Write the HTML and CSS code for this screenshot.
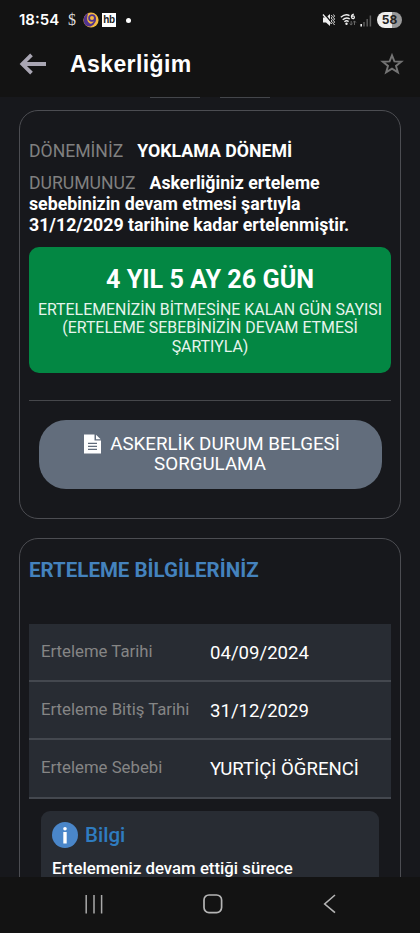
FILE: index.html
```html
<!DOCTYPE html>
<html lang="tr">
<head>
<meta charset="utf-8">
<title>Askerliğim</title>
<link rel="stylesheet" href="styles.css">
</head>
<body>
<header class="top">
  <div class="status">
    <span class="clock">18:54</span>
    <span class="dollar">$</span>
    <svg class="nine" width="16" height="16" viewBox="0 0 16 16"><circle cx="8" cy="8" r="7.600" fill="#f3b941"/><path d="M5.500.8A7.600 7.600 0 0 0 3.500 13.800C6 15.500 9.500 14.200 11 12C6.500 12.500 3.600 9.400 4.200 5.400C4.400 3.500 4.800 2 5.500.8Z" fill="#513390"/><circle cx="9" cy="6" r="2.900" fill="none" stroke="#513390" stroke-width="1.800"/><path d="M12 5.500C12.500 8.500 11.500 11.300 8.500 12.500" fill="none" stroke="#513390" stroke-width="1.800"/></svg>
    <span class="hb">hb</span>
    <span class="dot"></span>
    <div class="signals">
      <svg width="13" height="14" viewBox="0 0 13 14"><path d="M1 4.500h3L8 1v12L4 9.500H1z" fill="#eee"/><path d="M2.300.8L9.300 9.300" stroke="#131313" stroke-width="1.400"/><path d="M1 1.500L8.500 10.500" stroke="#eee" stroke-width="1.300"/><path d="M9.300 2l1 1.500-1 1.500 1 1.500-1 1.500 1 1.500-1 1.500M11.500 1.500l1 1.500-1 1.500 1 1.500-1 1.500 1 1.500-1 1.500 1 1.500" stroke="#ddd" fill="none"/></svg>
      <svg width="17" height="14" viewBox="0 0 17 14"><path d="M.8 4.300Q5.500.3 9.500 2.700M2.700 6.700Q6.300 3.700 9.800 6M4.400 8.800Q6.500 7 8.600 8.600" fill="none" stroke="#eee" stroke-width="1.400"/><circle cx="6.500" cy="10.700" r="1.200" fill="#eee"/><path d="M13.800 1.200Q11.300 1.800 11.500 4.200" stroke="#eee" stroke-width="1.300" fill="none"/><circle cx="13" cy="4.300" r="1.400" stroke="#eee" stroke-width="1.200" fill="none"/><path d="M11.200 8v4M9.800 10.500l1.400 1.600 1.400-1.600M14.500 12V8M13.100 9.500l1.400-1.600 1.400 1.600" stroke="#666" fill="none"/></svg>
      <svg width="12" height="13" viewBox="0 0 12 13"><path d="M1.200 10v2.500" stroke="#eee" stroke-width="1.600"/><path d="M4 8v4.500M7.200 5v7.500M10.400 1.500v11" stroke="#5c5c5c" stroke-width="1.500"/></svg>
      <span class="battery">58</span>
    </div>
  </div>
  <div class="bar">
    <svg class="back" width="28" height="24" viewBox="0 0 28 24"><path d="M27 12H4M12.500 2.800L3.300 12l9.200 9.200" fill="none" stroke="#a9a6b3" stroke-width="3.800"/></svg>
    <h1>Askerliğim</h1>
    <svg class="star" width="24" height="24" viewBox="0 0 24 24"><path d="M12 3.300l2.400 6.100 6.900.3-5.300 4.200 1.900 6.500-5.900-3.700-5.900 3.700 1.900-6.500L2.700 9.700l6.900-.3z" fill="none" stroke="#747474" stroke-width="1.900"/></svg>
  </div>
</header>
<main class="content">
  <div class="tabs"><i></i><i></i></div>
  <section class="card summary">
    <p class="period"><span class="key">DÖNEMİNİZ</span><b>YOKLAMA DÖNEMİ</b></p>
    <p class="state"><span class="key">DURUMUNUZ</span><b>Askerliğiniz erteleme<br>sebebinizin devam etmesi şartıyla<br>31/12/2029 tarihine kadar ertelenmiştir.</b></p>
    <div class="remaining">
      <strong>4 YIL 5 AY 26 GÜN</strong>
      <p>ERTELEMENİZİN BİTMESİNE KALAN GÜN SAYISI<br>(ERTELEME SEBEBİNİZİN DEVAM ETMESİ<br>ŞARTIYLA)</p>
    </div>
    <hr>
    <button class="query"><span class="line"><svg width="17" height="20" viewBox="0 0 17 20"><path d="M0 .5h10.500V6.500H17V19.500H0z" fill="#fff"/><path d="M12 .8L16.700 5.300H12z" fill="#fff"/><path d="M4 9.300h9M4 12.300h9M4 15.300h9" stroke="#626d7c" stroke-width="1.200"/></svg>ASKERLİK DURUM BELGESİ</span><span>SORGULAMA</span></button>
  </section>
  <section class="card details">
    <h2>ERTELEME BİLGİLERİNİZ</h2>
    <dl>
      <div><dt>Erteleme Tarihi</dt><dd>04/09/2024</dd></div>
      <div><dt>Erteleme Bitiş Tarihi</dt><dd>31/12/2029</dd></div>
      <div><dt>Erteleme Sebebi</dt><dd>YURTİÇİ ÖĞRENCİ</dd></div>
    </dl>
    <aside class="info">
      <h3><svg width="26" height="26" viewBox="0 0 26 26"><circle cx="13" cy="13" r="13" fill="#4a86c9"/><circle cx="13" cy="6.700" r="1.800" fill="#fff"/><path d="M13 10v11.500" stroke="#fff" stroke-width="3.400"/></svg>Bilgi</h3>
      <p>Ertelemeniz devam ettiği sürece</p>
    </aside>
  </section>
</main>
<nav class="nav">
  <svg width="18" height="19" viewBox="0 0 18 19"><path d="M1.200 0v18.500M9 0v18.500M16.600 0v18.500" stroke="#aaa" stroke-width="1.500"/></svg>
  <svg width="20" height="20" viewBox="0 0 20 20"><rect x="1" y="1" width="17.600" height="17.600" rx="5" fill="none" stroke="#b5b5b5" stroke-width="1.700"/></svg>
  <svg width="13" height="20" viewBox="0 0 13 20"><path d="M12 1L1.700 10 12 18.700" fill="none" stroke="#b5b5b5" stroke-width="1.600"/></svg>
</nav>
</body>
</html>
```
FILE: styles.css
```css
* { box-sizing: border-box; }
body, h1, h2, h3, p, dl, dd, hr { margin: 0; }
body {
  width: 420px; height: 933px; overflow: hidden;
  display: flex; flex-direction: column;
  background: #17181c; color: #fff;
  font-family: Roboto, sans-serif; white-space: nowrap;
}
svg { display: block; flex: none; }
.top { height: 97px; flex: none; background: #131313; }
.status { height: 40px; display: flex; align-items: center; padding: 0 18px 0 19px; }
.clock { font: 600 15px/18px Inter, sans-serif; width: 49px; }
.dollar { font: 16px/18px "Liberation Serif", serif; width: 15px; color: #ddd; }
.hb { margin-left: 3px; width: 14px; height: 14px; background: #fff; color: #222; font: 700 10px/13px "Liberation Sans", sans-serif; text-align: center; letter-spacing: -.3px; }
.dot { width: 5px; height: 5px; border-radius: 50%; background: #fff; margin-left: 10px; }
.signals { display: flex; align-items: center; margin-left: auto; gap: 5px; }
.signals svg:nth-child(3) { margin-left: -2px; }
.battery { width: 25px; height: 16px; border-radius: 8px; background: linear-gradient(90deg, #eee 58%, #999 58%); color: #222; font: 700 12px/16px Inter, sans-serif; text-align: center; }
.bar { height: 48px; display: flex; align-items: center; padding: 0 16px 0 19px; }
.bar h1 { font: 700 23px/28px "Liberation Sans", sans-serif; margin: -1px 0 0 23px; letter-spacing: .4px; }
.star { margin-left: auto; }
.content { flex: 1; min-height: 0; overflow: hidden; padding: 0 19px; }
.tabs { height: 13px; display: flex; justify-content: center; gap: 20px; }
.tabs i { width: 50px; height: 1px; background: #44464b; }
.card { border: 1px solid #4c4d52; border-radius: 19px; padding: 0 9px; }
.summary { height: 409px; padding-top: 30px; }
.key { color: #808080; margin-right: 14px; font-size: 17.600px; }
.period, .state { font-size: 17.500px; line-height: 21px; }
.period { margin-bottom: 11px; }
b { font-weight: 700; font-size: 17.750px; }
.remaining { height: 126px; margin-top: 11px; border-radius: 10px; background: #038743; text-align: center; padding-top: 18px; }
.remaining strong { display: block; font-size: 25.200px; line-height: 30px; }
.remaining p { font-size: 15.900px; line-height: 18.700px; margin-top: 5.500px; color: #e6f4ec; }
hr { border: 0; height: 1px; background: #46474b; margin-top: 27px; }
.query { display: flex; flex-direction: column; align-items: center; justify-content: center; width: 343px; height: 69px; margin: 19px 0 0 9.500px; border: 0; border-radius: 27px; background: #626d7c; color: #fff; font: 18.750px/20.500px Roboto, sans-serif; padding: 0 0 1px; }
.line { display: flex; align-items: center; gap: 9px; padding-left: 4px; }
.details { height: 420px; margin-top: 19px; padding-top: 19px; }
h2 { font-size: 20.500px; font-weight: 700; line-height: 25px; color: #4482bd; }
dl { margin-top: 41px; }
dl div { height: 58.200px; display: flex; align-items: center; background: #282c33; border-bottom: 2px solid #44484f; padding: 0 12px 2px; }
dt { width: 169px; color: #858585; font-size: 16.750px; }
dd { font-size: 18.600px; padding-top: 3px; }
.info { margin: 12px 12px 0; height: 120px; border-radius: 9px; background: #282c33; padding: 11px 11px; }
.info h3 { display: flex; align-items: center; gap: 7px; font-size: 20.500px; line-height: 26px; font-weight: 500; color: #2f7cc0; }
.info p { font-size: 16.800px; line-height: 20px; font-weight: 500; margin-top: 10px; }
.nav { height: 56px; flex: none; background: #131313; display: flex; align-items: center; justify-content: space-between; padding: 0 84px 2px 85px; }
```
